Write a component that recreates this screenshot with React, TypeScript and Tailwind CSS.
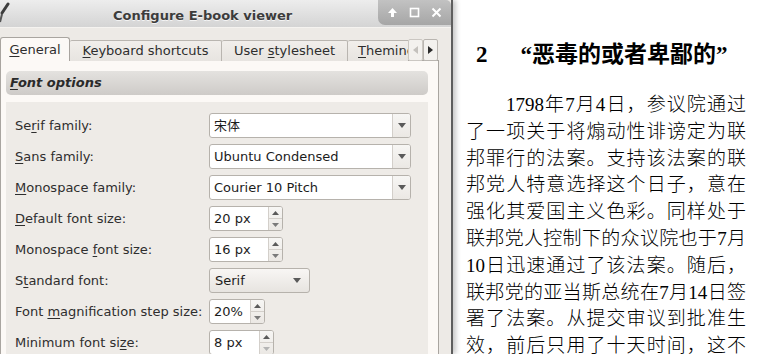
import React from "react";

const ui = "font-['DejaVu_Sans','Noto_Sans_CJK_SC',sans-serif]";

function U({ children }: { children: React.ReactNode }) {
  return <span className="underline decoration-1 underline-offset-2">{children}</span>;
}

function Arrow({ light }: { light?: boolean }) {
  return (
    <svg width="8" height="5" viewBox="0 0 8 5">
      <path d="M0 0h8L4 5z" fill={light ? "#9a9a9a" : "#5a5a5a"} />
    </svg>
  );
}

function Combo({ value, width = "w-[202px]" }: { value: string; width?: string }) {
  return (
    <div
      className={`flex h-[25px] ${width} overflow-hidden rounded-[3px] border border-[#b6b2ac] bg-white`}
    >
      <div className="flex flex-1 items-center pl-[4px] text-[13px] text-[#1c1c1c]">{value}</div>
      <div className="flex w-[18px] items-center justify-center border-l border-[#d3cfca] bg-gradient-to-b from-[#f7f6f4] to-[#ebe8e4]">
        <Arrow />
      </div>
    </div>
  );
}

function Spin({ value, width, downLight }: { value: string; width: string; downLight?: boolean }) {
  return (
    <div
      className={`flex h-[25px] ${width} overflow-hidden rounded-[3px] border border-[#b6b2ac] bg-white`}
    >
      <div className="flex flex-1 items-center pl-[4px] text-[13px] text-[#1c1c1c]">{value}</div>
      <div className="flex w-[14px] flex-col border-l border-[#d3cfca] bg-gradient-to-b from-[#f7f6f4] to-[#ebe8e4]">
        <div className="flex flex-1 items-center justify-center border-b border-[#d3cfca]">
          <svg width="7" height="4" viewBox="0 0 7 4">
            <path d="M0 4h7L3.5 0z" fill="#5a5a5a" />
          </svg>
        </div>
        <div className="flex flex-1 items-center justify-center">
          <svg width="7" height="4" viewBox="0 0 7 4">
            <path d="M0 0h7L3.5 4z" fill={downLight ? "#b4b4b4" : "#7a7a7a"} />
          </svg>
        </div>
      </div>
    </div>
  );
}

function ButtonCombo({ value }: { value: string }) {
  return (
    <div className="flex h-[25px] w-[101px] items-center justify-between rounded-[3px] border border-[#b6b2ac] bg-gradient-to-b from-[#f8f6f4] to-[#e7e4e0] pl-[5px] pr-[8px] text-[13px] text-[#1c1c1c]">
      {value}
      <Arrow />
    </div>
  );
}

const rows: { label: React.ReactNode; field: React.ReactNode }[] = [
  { label: <>Se<U>r</U>if family:</>, field: <Combo value="宋体" /> },
  { label: <><U>S</U>ans family:</>, field: <Combo value="Ubuntu Condensed" /> },
  { label: <><U>M</U>onospace family:</>, field: <Combo value="Courier 10 Pitch" /> },
  { label: <><U>D</U>efault font size:</>, field: <Spin value="20 px" width="w-[74px]" /> },
  { label: <>Monospace <U>f</U>ont size:</>, field: <Spin value="16 px" width="w-[74px]" /> },
  { label: <>S<U>t</U>andard font:</>, field: <ButtonCombo value="Serif" /> },
  { label: <>Font <U>m</U>agnification step size:</>, field: <Spin value="20%" width="w-[56px]" /> },
  { label: <>Minimum font si<U>z</U>e:</>, field: <Spin value="8 px" width="w-[65px]" downLight /> },
];

const tabs = [
  { label: <><U>G</U>eneral</>, w: "w-[70px]", active: true },
  { label: <><U>K</U>eyboard shortcuts</>, w: "w-[152px]" },
  { label: <>User <U>s</U>tylesheet</>, w: "w-[126px]" },
  { label: <><U>T</U>heming</>, w: "w-[86px]" },
];

const lines = [
  "了一项关于将煽动性诽谤定为联",
  "邦罪行的法案。支持该法案的联",
  "邦党人特意选择这个日子，意在",
  "强化其爱国主义色彩。同样处于",
  "联邦党人控制下的众议院也于7月",
  "10日迅速通过了该法案。随后，",
  "联邦党的亚当斯总统在7月14日签",
  "署了法案。从提交审议到批准生",
  "效，前后只用了十天时间，这不",
];

export default function App() {
  return (
    <div className="flex h-[354px] w-[770px] overflow-hidden bg-white">
      {/* dialog window */}
      <div
        className={`relative z-10 flex w-[453px] shrink-0 flex-col border-r-2 border-[#5e5e5e] bg-[#edeae6] shadow-[3px_0_5px_rgba(0,0,0,0.22)] ${ui}`}
      >
        <div className="flex h-[28px] items-start border-b border-[#f5f3f0] bg-gradient-to-b from-[#ededed] to-[#d4d4d4] rounded-tr-[5px]">
          <svg width="10" height="26" viewBox="0 0 10 26" className="mt-[2px]">
            <path d="M8 2l-6 9" stroke="#3d3d3d" strokeWidth="3" strokeLinecap="round" />
            <path d="M2 12l-2 8" stroke="#555" strokeWidth="2" />
          </svg>
          <div className="ml-[103px] mt-[6px] text-[13px] font-bold text-[#3c3c3c] [text-shadow:0_1px_0_#f4f4f4]">
            Configure E-book viewer
          </div>
          <div className="ml-auto flex h-[25px] w-[73px] items-center gap-[11px] rounded-bl-[7px] rounded-tr-[5px] bg-gradient-to-b from-[#c2c2c2] to-[#a6a6a6] pl-[9px]">
            <svg width="11" height="11" viewBox="0 0 11 11">
              <path d="M5.5 1L1 6h3v4h3V6h3z" fill="#fff" />
            </svg>
            <svg width="11" height="11" viewBox="0 0 11 11">
              <rect x="1.5" y="1.5" width="8" height="8" fill="none" stroke="#fff" strokeWidth="1.6" />
            </svg>
            <svg width="11" height="11" viewBox="0 0 11 11">
              <path d="M1.5 1.5l8 8M9.5 1.5l-8 8" stroke="#fff" strokeWidth="2" />
            </svg>
          </div>
        </div>

        <div className="flex flex-1 flex-col pr-[12px] pt-[9px]">
          {/* tab bar */}
          <div className="relative z-10 flex h-[24px] items-end">
            <div className="flex w-[408px] items-end overflow-hidden">
              {tabs.map((t, i) => (
                <div
                  key={i}
                  className={`flex shrink-0 items-center whitespace-nowrap text-[13px] text-[#2e2e2e] ${t.w} ${
                    t.active
                      ? "h-[24px] rounded-t-[3px] border border-b-0 border-[#a9a5a0] bg-[#fcf9f6]"
                      : "h-[21px] rounded-t-[2px] border border-l-0 border-b-0 border-[#b9b5b0] bg-gradient-to-b from-[#f1eeeb] to-[#e7e4e0]"
                  } ${i === 3 ? "justify-start pl-[10px]" : "justify-center"}`}
                >
                  <span>{t.label}</span>
                </div>
              ))}
            </div>
            <div className="flex h-[22px] w-[15px] items-center justify-center rounded-[2px] border border-[#cbc7c2] bg-[#f3f1ee]">
              <svg width="5" height="8" viewBox="0 0 5 8">
                <path d="M5 0v8L0 4z" fill="#c4c1bd" />
              </svg>
            </div>
            <div className="flex h-[22px] w-[15px] items-center justify-center rounded-[2px] border border-[#b9b5b0] bg-[#f3f1ee]">
              <svg width="5" height="8" viewBox="0 0 5 8">
                <path d="M0 0v8l5-4z" fill="#2a2a2a" />
              </svg>
            </div>
          </div>

          {/* tab pane */}
          <div className="-mt-px flex-1 border border-[#a9a5a0] bg-[#fcf9f6] pl-[5px] pr-[10px] pt-[10px]">
            <div className="flex h-[24px] items-center rounded-[5px] bg-gradient-to-b from-[#e4e2df] to-[#cecbc8] pl-[4px] text-[13px] font-bold italic text-[#2a2a2a]">
              <span>
                <U>F</U>ont options
              </span>
            </div>
            <div className="mt-[7px] h-[300px] bg-[#eeebe7] pl-[9px] pt-[8px]">
              {rows.map((r, i) => (
                <div key={i} className="grid h-[31px] grid-cols-[194px_1fr] items-center">
                  <div className="whitespace-nowrap text-[13px] text-[#2e2e2e]">{r.label}</div>
                  <div>{r.field}</div>
                </div>
              ))}
            </div>
          </div>
        </div>
      </div>

      {/* book page */}
      <div className="flex-1 bg-white pl-[13px] pt-[40px] text-black font-['Liberation_Serif','Noto_Sans_CJK_SC',serif]">
        <div className="ml-[10px] flex h-[30px] items-center gap-[33px] text-[23px] font-bold">
          <span>2</span>
          <span>“恶毒的或者卑鄙的”</span>
        </div>
        <div className="mt-[22px] w-[280px] text-[19px] font-light leading-[26.8px]">
          <div className="pl-[40px] [text-align-last:justify]">1798年7月4日，参议院通过</div>
          {lines.map((l, i) => (
            <div key={i} className="whitespace-nowrap [text-align-last:justify]">
              {l}
            </div>
          ))}
        </div>
      </div>
    </div>
  );
}
